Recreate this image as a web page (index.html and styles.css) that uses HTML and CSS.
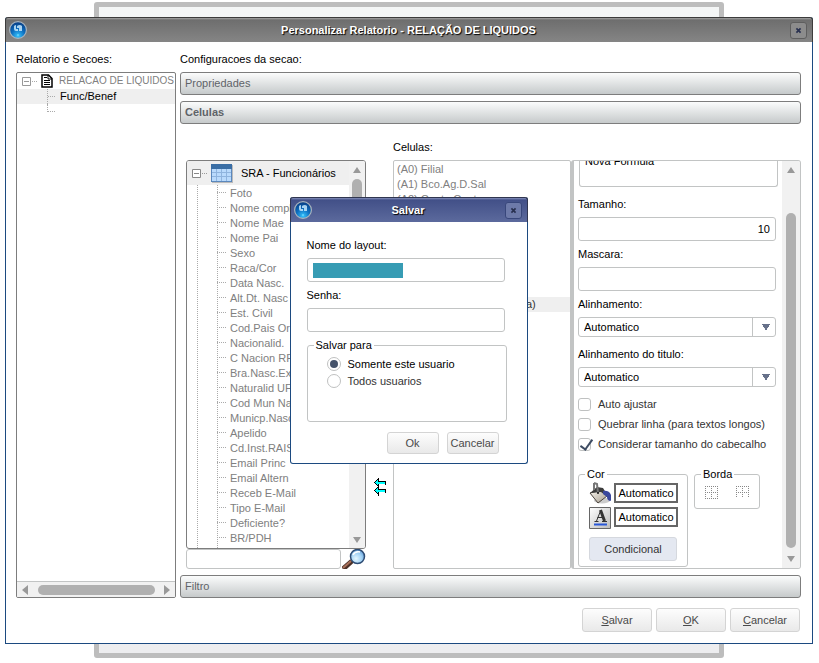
FILE: index.html
```html
<!DOCTYPE html>
<html lang="pt-BR">
<head>
<meta charset="utf-8">
<title>Personalizar Relatorio</title>
<link rel="stylesheet" href="styles.css">
</head>
<body>
<div class="stage">
  <div class="backdrop"></div>

  <main class="window">
    <header class="titlebar">
      <svg class="logo" viewBox="0 0 18 18" aria-hidden="true">
        <defs><radialGradient id="orb" cx="50%" cy="85%" r="80%"><stop offset="0" stop-color="#35c4ff"/><stop offset=".5" stop-color="#0d6fc0"/><stop offset="1" stop-color="#083f86"/></radialGradient></defs>
        <circle cx="9" cy="9" r="8.4" fill="url(#orb)" stroke="#a9b4bd" stroke-width="1.2"/>
        <path d="M5 5q1-1 2-1v4h2v2H7q-2 0-2-2zM8 5q3-2 5 0v5h-3V7H8z" fill="#c4e6fb" opacity=".85"/>
        <path d="M8 14h2" stroke="#7fe0ff"/>
      </svg>
      <h1>Personalizar Relatorio - RELAÇÃO DE LIQUIDOS</h1>
      <button class="close" type="button" aria-label="Fechar"><svg viewBox="0 0 6 6"><path d="M.5.5l5 5M5.5.5l-5 5"/></svg></button>
    </header>

    <div class="content">
      <section class="side">
        <h2 class="caption">Relatorio e Secoes:</h2>
        <div class="sections">
          <ul class="outline">
            <li class="outline-root">
              <svg class="minus" viewBox="0 0 15 9" aria-hidden="true"><path d="M.5.5h8v8h-8zM2 4.5h5" fill="none" stroke="#999"/><path d="M10 4.5h5" stroke="#aaa" stroke-dasharray="1 1"/></svg>
              <svg class="doc" viewBox="0 0 12 14" aria-hidden="true"><path d="M1 1h6.500l3.500 3.500V13H1z" fill="#fff" stroke="#000" stroke-width="1.500"/><path d="M7 1v4h4M3 3.500h3M3 6.500h6M3 8.500h6M3 10.500h6" fill="none" stroke="#000"/></svg>
              <span>RELACAO DE LIQUIDOS</span>
            </li>
            <li class="outline-item selected">Func/Benef</li>
            <li class="outline-item last"></li>
          </ul>
          <div class="hscroll">
            <svg viewBox="0 0 6 10"><path d="M6 0v10L0 5z"/></svg>
            <i></i>
            <svg viewBox="0 0 6 10"><path d="M0 0v10l6-5z"/></svg>
          </div>
        </div>
      </section>

      <section class="config">
        <h2 class="caption">Configuracoes da secao:</h2>
        <button class="fold" type="button">Propriedades</button>
        <button class="fold open" type="button">Celulas</button>

        <div class="workspace">
          <div class="source">
            <div class="tree">
              <div class="tree-main">
                <div class="tree-head">
                  <svg class="minus" viewBox="0 0 15 9" aria-hidden="true"><path d="M.5.5h8v8h-8zM2 4.500h5" fill="#fff" stroke="#888"/><path d="M10 4.500h5" stroke="#999" stroke-dasharray="1 1"/></svg>
                  <svg class="grid-icon" viewBox="0 0 22 19" aria-hidden="true"><path d="M1 1h21v18H1z" fill="#bbb"/><path d="M0 0h21v18H0z" fill="#3a6ea5"/><path d="M1 5h19v12H1z" fill="#b9dafc"/><path d="M1 8.500h19M1 12.500h19M5.500 5v12M10.500 5v12M15.500 5v12" stroke="#8fb4de"/><path d="M.5 5v12.500h20V5" fill="none" stroke="#5b88bd"/></svg>
                  <span>SRA - Funcionários</span>
                </div>
                <ul class="fields">
                  <li>Foto</li><li>Nome completo</li><li>Nome Mae</li><li>Nome Pai</li><li>Sexo</li><li>Raca/Cor</li><li>Data Nasc.</li><li>Alt.Dt. Nasc</li><li>Est. Civil</li><li>Cod.Pais Ori</li><li>Nacionalid.</li><li>C Nacion RFB</li><li>Bra.Nasc.Ext</li><li>Naturalid UF</li><li>Cod Mun Nasc</li><li>Municp.Nasc</li><li>Apelido</li><li>Cd.Inst.RAIS</li><li>Email Princ</li><li>Email Altern</li><li>Receb E-Mail</li><li>Tipo E-Mail</li><li>Deficiente?</li><li>BR/PDH</li>
                </ul>
              </div>
              <div class="vscroll">
                <svg viewBox="0 0 8 6"><path d="M0 6h8L4 0z"/></svg>
                <i class="short"></i>
                <svg viewBox="0 0 8 6"><path d="M0 0h8L4 6z"/></svg>
              </div>
            </div>
            <div class="search">
              <input type="text" aria-label="Pesquisar campo">
              <button type="button" aria-label="Pesquisar">
                <svg viewBox="0 0 24 20">
                  <defs><radialGradient id="lens" cx="40%" cy="65%" r="70%"><stop offset="0" stop-color="#e6f8ff"/><stop offset=".6" stop-color="#9fd0f4"/><stop offset="1" stop-color="#5d98d4"/></radialGradient></defs>
                  <path d="M1 20l9-8" stroke="#4a3027" stroke-width="5"/><path d="M1 19l8-7" stroke="#a8705a" stroke-width="2"/>
                  <circle cx="15.500" cy="7.500" r="7" fill="url(#lens)" stroke="#2e4c73" stroke-width="1.500"/><path d="M11 6q2-4 7-3" stroke="#fff" fill="none" stroke-width="1.500"/>
                </svg>
              </button>
            </div>
          </div>

          <div class="transfer">
            <button type="button" aria-label="Mover abaixo"><svg viewBox="0 0 14 18"><path d="M4 14h6l-3 3z" fill="#233"/></svg></button>
            <button type="button" aria-label="Remover todas"><svg viewBox="0 0 12 18" shape-rendering="crispEdges"><path d="M1 4h1V3h1V2h1V1h1v3h6v2H5v2H4V7H3V6H2V5H1zM1 12h1v-1h1v-1h1V9h1v3h6v2H5v2H4v-1H3v-1H2v-1H1z" fill="#0ff"/><path d="M4 0h1v3h7v4h-1V4H4V2H3V1h1zM2 2h1v1H2zM1 3h1v1H1zM0 4h1v1H0zM1 5h1v1H1zM2 6h1v1H2zM3 7h1v1H3zM4 6h1v3H4zM4 9h1v2h7v4h-1v-3H4v-2H3V9zM2 10h1v1H2zM1 11h1v1H1zM0 12h1v1H0zM1 13h1v1H1zM2 14h1v1H2zM3 15h1v1H3zM4 14h1v4H4z" fill="#000"/></svg></button>
          </div>

          <div class="cells">
            <h3 class="caption">Celulas:</h3>
            <ul class="cell-list">
              <li>(A0) Filial</li>
              <li>(A1) Bco.Ag.D.Sal</li>
              <li>(A2) Conta.Cont</li>
              <li class="current">a)</li>
            </ul>
          </div>

          <div class="props">
            <form class="props-form">
              <div class="formula">Nova Formula</div>
              <div class="field"><label for="size">Tamanho:</label><input class="number" id="size" type="text" value="10"></div>
              <div class="field"><label for="mask">Mascara:</label><input id="mask" type="text"></div>
              <div class="field pick"><label for="align">Alinhamento:</label><select id="align"><option>Automatico</option></select></div>
              <div class="field pick"><label for="talign">Alinhamento do titulo:</label><select id="talign"><option>Automatico</option></select></div>
              <label class="check"><input type="checkbox">Auto ajustar</label>
              <label class="check"><input type="checkbox">Quebrar linha (para textos longos)</label>
              <label class="check"><input type="checkbox" checked>Considerar tamanho do cabecalho</label>
              <div class="groups">
                <fieldset class="color">
                  <legend>Cor</legend>
                  <div class="color-row">
                    <svg viewBox="0 0 22 22" aria-hidden="true">
                      <defs><linearGradient id="pail" x1="0" y1="0" x2="1" y2="1"><stop offset="0" stop-color="#fbf8f1"/><stop offset="1" stop-color="#a39a8c"/></linearGradient></defs>
                      <ellipse cx="13" cy="18.500" rx="8" ry="3" fill="#ccc"/>
                      <path d="M1 11L13 8l5 6-9 7z" fill="url(#pail)" stroke="#4b443d"/>
                      <path d="M1 11l7-6 6 1 5 8-3-1-4-3z" fill="#3c3c3c"/>
                      <path d="M5 1l3 1 1 9M5 1v7" fill="none" stroke="#777" stroke-width="2"/>
                      <circle cx="9" cy="11" r="1" fill="#111"/>
                      <path d="M14 9q6-1 8 4t-1 6q-3-1-3-4l-4-3z" fill="#3a479c"/>
                    </svg>
                    <button class="swatch" type="button">Automatico</button>
                  </div>
                  <div class="color-row">
                    <svg viewBox="0 0 22 22" aria-hidden="true"><defs><linearGradient id="key" x1="0" y1="0" x2="1" y2="1"><stop offset="0" stop-color="#fff"/><stop offset="1" stop-color="#bbb"/></linearGradient></defs><path d="M.5.5h21v21H.5z" fill="url(#key)" stroke="#666"/><path d="M5.500 14.500h4M13 14.500h5M7.500 14l4-10" stroke="#333" fill="none"/><path d="M8.500 10.500h5" stroke="#333"/><path d="M11.500 3l4 11" stroke="#333" stroke-width="3"/><path d="M5 17.500h13" stroke="#2857d8" stroke-width="2"/></svg>
                    <button class="swatch" type="button">Automatico</button>
                  </div>
                  <button class="conditional" type="button">Condicional</button>
                </fieldset>
                <fieldset class="border">
                  <legend>Borda</legend>
                  <div class="border-row">
                    <button type="button" aria-label="Borda completa"><svg viewBox="0 0 13 13"><path d="M0 .5h13M0 6.500h13M0 12.500h13M.5 0v13M6.500 0v13M12.500 0v13"/></svg></button>
                    <button type="button" aria-label="Borda superior"><svg viewBox="0 0 13 13"><path d="M0 .5h13M0 6.500h13M.5 0v11M6.500 0v11M12.500 0v11"/></svg></button>
                  </div>
                </fieldset>
              </div>
            </form>
            <div class="vscroll wide">
              <svg viewBox="0 0 8 6"><path d="M0 6h8L4 0z"/></svg>
              <i class="long"></i>
              <svg viewBox="0 0 8 6"><path d="M0 0h8L4 6z"/></svg>
            </div>
          </div>
        </div>

        <button class="fold" type="button">Filtro</button>
      </section>
    </div>

    <footer class="actions">
      <button class="btn" type="button"><u>S</u>alvar</button>
      <button class="btn" type="button"><u>O</u>K</button>
      <button class="btn" type="button"><u>C</u>ancelar</button>
    </footer>
  </main>

  <div class="dialog" role="dialog" aria-labelledby="dialog-title">
    <header class="titlebar blue">
      <svg class="logo" viewBox="0 0 18 18" aria-hidden="true">
        <circle cx="9" cy="9" r="8.400" fill="url(#orb)" stroke="#a9b4bd" stroke-width="1.200"/>
        <path d="M5 5q1-1 2-1v4h2v2H7q-2 0-2-2zM8 5q3-2 5 0v5h-3V7H8z" fill="#c4e6fb" opacity=".85"/>
        <path d="M8 14h2" stroke="#7fe0ff"/>
      </svg>
      <h2 id="dialog-title">Salvar</h2>
      <button class="close" type="button" aria-label="Fechar"><svg viewBox="0 0 6 6"><path d="M.5.5l5 5M5.500.5l-5 5"/></svg></button>
    </header>
    <form class="dialog-body">
      <div class="field redacted"><label for="layout">Nome do layout:</label><input id="layout" type="text"></div>
      <div class="field"><label for="password">Senha:</label><input id="password" type="password"></div>
      <fieldset class="target">
        <legend>Salvar para</legend>
        <label class="radio on"><input type="radio" name="target" checked>Somente este usuario</label>
        <label class="radio"><input type="radio" name="target">Todos usuarios</label>
      </fieldset>
      <div class="dialog-actions">
        <button class="btn small" type="button">Ok</button>
        <button class="btn small" type="button">Cancelar</button>
      </div>
    </form>
  </div>
</div>
</body>
</html>
```
FILE: styles.css
```css
* { box-sizing: border-box; }

body {
  margin: 0;
  background: #fff;
  color: #000;
  font: 11px/16px "Liberation Sans", Arial, sans-serif;
}

h1, h2, h3, ul { margin: 0; padding: 0; font-size: 11px; list-style: none; }
button, input, select { font: inherit; color: inherit; margin: 0; }
button { padding: 0; border: 0; background: none; }
svg { display: block; flex: none; }
fieldset { margin: 0; padding: 0; min-width: 0; border: 1px solid #c2c4c4; border-radius: 3px; }
legend { margin-left: 6px; padding: 0 2px; }

/* Stacked layers: page frame, main window, dialog */
.stage { display: grid; min-height: 100vh; }
.stage > * { grid-area: 1 / 1; }
.backdrop {
  margin: 2px 95px 5px 94px;
  border: 5px solid #bdbdbd;
  border-radius: 3px;
  background: linear-gradient(#f4f6f6, #ededef);
}
.window {
  margin: 17px 6px 19px 5px;
  border: 1px solid #1c4a80;
  border-top: 0;
  border-radius: 3px 3px 0 0;
  background: #fff;
}

/* Title bars */
.titlebar {
  display: flex;
  align-items: center;
  justify-content: space-between;
  height: 25px;
  margin: 0 -1px;
  padding: 0 5px 0 3px;
  border: 1px solid #3c3c3c;
  border-bottom: 0;
  border-radius: 3px 3px 0 0;
  background: linear-gradient(#a4a4a4 0, #6e6e6e 2px, #858585);
}
.titlebar.blue { border-color: #303650; background: linear-gradient(#8590bc 0, #425088 2px, #5c6a9d); }
.titlebar h1, .titlebar h2 { color: #fff; font-weight: bold; text-shadow: 1px 1px 1px #000; white-space: nowrap; }
.logo { width: 18px; height: 18px; }
.close {
  display: grid;
  place-items: center;
  width: 17px;
  height: 17px;
  border: 1px solid #5e5e5e;
  border-radius: 3px;
  background: #8c8c8c;
}
.blue .close { border-color: #38477b; background: #6d7aa9; }
.close svg { width: 5px; height: 5px; overflow: visible; stroke: #28304f; stroke-width: 2; }

/* Main columns */
.content { display: grid; grid-template-columns: 160px minmax(0, 1fr); gap: 4px; padding: 9px 11px 0 10px; }
.caption { height: 21px; font-weight: normal; }
.side, .config { display: flex; flex-direction: column; }

.sections {
  display: flex;
  flex: 1;
  flex-direction: column;
  justify-content: space-between;
  overflow: hidden;
  border: 1px solid #7d7d7d;
  border-radius: 2px;
}
.outline { color: #808080; }
.outline-root { display: flex; align-items: center; height: 16px; padding-left: 5px; font-size: 10px; white-space: nowrap; }
.minus { width: 15px; height: 9px; }
.doc { width: 12px; height: 14px; margin: 0 6px 0 4px; }
.outline-item { display: flex; align-items: center; gap: 3px; height: 15px; padding-left: 30px; color: #000; line-height: 15px; }
.outline-item::before { width: 9px; height: 15px; border-left: 1px dotted #aaa; background: repeating-linear-gradient(90deg, #aaa 0 1px, transparent 1px 2px) 0 7px / 8px 1px no-repeat; content: ""; }
.outline-item.last::before { height: 8px; align-self: flex-start; }
.selected { background: #efefef; }

.hscroll { display: flex; align-items: center; justify-content: space-between; height: 16px; padding: 0 5px; border-top: 1px solid #c2c4c4; background: #f1f1f1; }
.hscroll i { width: 117px; height: 10px; border-radius: 5px; background: #b0b0b0; }
.hscroll svg { width: 6px; height: 10px; fill: #999; }

.fold {
  height: 23px;
  margin-bottom: 6px;
  padding: 0 4px 2px;
  border: 1px solid #7d7d7d;
  border-radius: 3px;
  background: linear-gradient(#fbfcfc, #c6cacb);
  color: #5f6368;
  line-height: 14px;
  text-align: left;
}
.fold.open { font-weight: bold; }
.fold:last-child { margin: 0; }

.workspace { display: grid; grid-template-columns: 180px 27px minmax(0, 1fr) 230px; margin: 9px 0 6px; padding-left: 6px; }

/* Field tree */
.source { padding-top: 21px; }
.tree { display: flex; overflow: hidden; border: 1px solid #7d7d7d; border-radius: 3px; }
.tree-main { flex: 1; min-width: 0; background: repeating-linear-gradient(#aaa 0 1px, transparent 1px 2px) 10px 0 / 1px 100% no-repeat; }
.tree-head { display: flex; align-items: center; height: 24px; padding-left: 5px; background: #efefef; }
.grid-icon { width: 22px; height: 19px; margin: 0 8px 0 4px; }
.fields { margin-left: 30px; padding-bottom: 3px; background: repeating-linear-gradient(#aaa 0 1px, transparent 1px 2px) 0 0 / 1px 100% no-repeat; color: #808080; }
.fields li { display: flex; align-items: center; gap: 3px; height: 15px; white-space: nowrap; }
.fields li::before { width: 10px; height: 1px; background: repeating-linear-gradient(90deg, #aaa 0 1px, transparent 1px 2px); content: ""; }

.vscroll { display: flex; flex: none; flex-direction: column; align-items: center; width: 16px; padding: 6px 0 5px; background: #f1f1f1; }
.vscroll svg { width: 8px; height: 6px; fill: #999; }
.vscroll svg:last-child { margin-top: auto; }
.vscroll i { width: 10px; border-radius: 5px; background: #b0b0b0; }
.vscroll .short { height: 60px; margin-top: 6px; }
.vscroll .long { flex: 1; margin: 40px 0 8px; }
.vscroll.wide { width: 18px; padding-bottom: 6px; }

.search { display: flex; justify-content: space-between; height: 20px; }
.search input { width: 155px; }
.search svg { width: 24px; height: 20px; }
input[type="text"], input[type="password"] { height: 24px; padding: 0 5px; border: 1px solid #c2c4c4; border-radius: 3px; outline: 0; background: #fff; }
.search input[type="text"] { height: 20px; }

.transfer { display: flex; flex-direction: column; align-items: center; justify-content: flex-end; gap: 12px; padding-bottom: 73px; }
.transfer svg { width: 12px; height: 18px; }

/* Selected cells */
.cells { display: flex; flex-direction: column; }
.cell-list { flex: 1; padding-top: 1px; border: 1px solid #c2c4c4; border-radius: 2px; color: #808080; }
.cell-list li { height: 15px; padding-left: 3px; line-height: 15px; }
.cell-list .current { margin-top: 90px; padding-left: 132px; background: #efefef; color: #333; }

/* Cell properties */
.props { display: flex; margin-top: 21px; overflow: hidden; border: 1px solid #c2c4c4; border-left-width: 3px; border-radius: 3px; }
.props-form { flex: 1; padding: 0 6px 1px 4px; }
.formula { height: 34px; margin: -8px -2px 9px 1px; padding-left: 5px; border: 1px solid #c2c4c4; border-top: 0; border-radius: 3px; line-height: 16px; }
.field { display: flex; flex-direction: column; gap: 5px; margin-bottom: 5px; }
.field.pick { margin-bottom: 9px; }
.number { text-align: right; }
select {
  height: 20px;
  padding: 0 5px;
  border: 1px solid #c2c4c4;
  border-radius: 3px;
  appearance: none;
  background:
    linear-gradient(to bottom right, #67718a 50%, transparent 51%) right 5px top 6px / 4px 7px no-repeat,
    linear-gradient(to bottom left, #67718a 50%, transparent 51%) right 9px top 6px / 4px 7px no-repeat,
    linear-gradient(#c2c4c4, #c2c4c4) right 22px top / 1px 100% no-repeat,
    #fff;
}
.check, .radio { display: flex; align-items: center; color: #333; }
.check { gap: 7px; height: 20px; white-space: nowrap; }
.pick + .check { margin-top: -2px; }
.check input, .radio input { flex: none; margin: 0; border: 1px solid #bfc1c1; appearance: none; background: #fff; }
.check input { width: 13px; height: 13px; border-radius: 3px; }
.check input:checked::after { display: block; width: 5px; height: 11px; margin: -2px 0 0 4px; border: solid #3e4c63; border-width: 0 2px 2px 0; transform: rotate(36deg); content: ""; }

.groups { display: flex; align-items: flex-start; gap: 6px; margin-top: 12px; }
.color { width: 110px; padding: 0 9px 5px 10px; }
.color legend { margin-left: -4px; }
.color-row { display: flex; align-items: center; justify-content: space-between; height: 24px; }
.color-row:first-of-type { margin-top: -1px; }
.color-row svg { width: 22px; height: 22px; }
.color-row + .color-row { align-items: flex-start; padding-top: 2px; }
.swatch { width: 64px; height: 20px; border: 2px solid #666; background: #fff; line-height: 14px; }
.conditional { width: 88px; height: 24px; margin-top: 8px; border: 1px solid #d5d8de; border-radius: 3px; background: #e4e8f1; color: #333; }
.border { width: 66px; padding: 4px 10px 9px; }
.border legend { margin-left: -4px; }
.border-row { display: flex; justify-content: space-between; }
.border svg { width: 13px; height: 13px; stroke: #888; stroke-dasharray: 1 1; }

/* Buttons */
.btn { width: 70px; height: 24px; border: 1px solid #d4d4d4; border-radius: 3px; background: linear-gradient(#fdfdfd, #e9e9e9); color: #4a4a4a; }
.btn.small { width: 52px; height: 22px; }
.actions { display: flex; justify-content: flex-end; gap: 4px; padding: 10px 12px 11px; }

/* Dialog */
.dialog { z-index: 1; width: 238px; margin: 0 2px 2px 0; place-self: center; border: 1px solid #1c4a80; border-top: 0; border-radius: 3px; background: #fff; }
.dialog-body { padding: 15px 20px 9px 16px; }
.dialog .field { width: 198px; }
.redacted input { background: linear-gradient(#379cb4, #379cb4) 5px 4px / 90px 15px no-repeat #fff; }
.target { height: 85px; margin-bottom: 10px; padding: 2px 19px; }
.target legend { margin-left: -13px; }
.radio { gap: 7px; height: 17px; }
.radio.on { color: #000; }
.radio input { display: grid; place-items: center; width: 14px; height: 14px; border-radius: 50%; }
.radio input:checked::after { width: 8px; height: 8px; border-radius: 50%; background: #44526a; content: ""; }
.dialog-actions { display: flex; justify-content: flex-end; gap: 8px; padding-right: 8px; }
```
